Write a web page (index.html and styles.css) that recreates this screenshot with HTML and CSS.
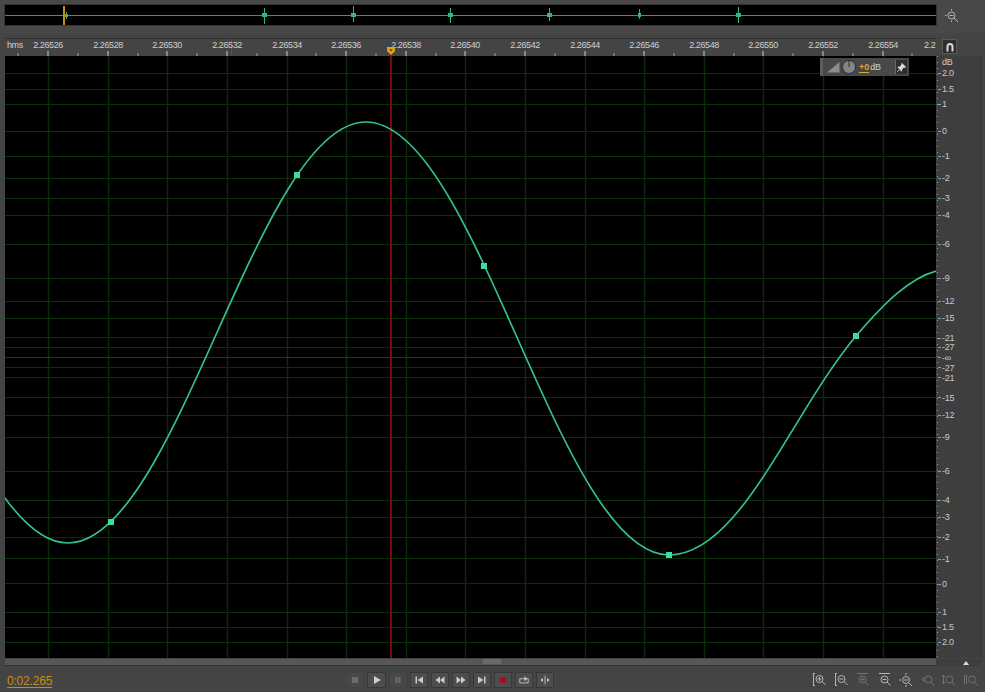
FILE: index.html
```html
<!DOCTYPE html>
<html lang="en">
<head>
    <meta charset="UTF-8">
    <meta name="viewport" content="width=device-width, initial-scale=1.0">
    <title>Waveform Editor</title>
    <link rel="stylesheet" href="styles.css">
</head>
<body>
    <div class="app">
        <div class="topRow">
            <svg class="overview" width="931" height="20" viewBox="5 5 931 20">
                <rect x="5" y="5" width="931" height="20" fill="#000"/>
                <line class="ovLine" x1="5" y1="15.5" x2="936" y2="15.5"/>
                <path class="ovSpike" d="M66.5 12v7M264.5 8v16M353.5 6v16M450.5 8v15M549.5 8v13M639.5 9v10M738.5 7v16"/>
                <path class="ovBlob" d="M65 14h3v3h-3zM262 13h5v4h-5zM351 13h5v4h-5zM448 13h5v4h-5zM547 13h5v4h-5zM638 13h3v4h-3zM736 13h5v4h-5z"/>
                <rect x="63" y="6" width="2" height="19" fill="#d08a10"/>
            </svg>
            <svg class="zoomOverview" width="16" height="16" viewBox="0 0 16 16">
                <circle class="ic" cx="7.5" cy="7.5" r="3.5"/>
                <path class="ic" d="M5.5 7.5h4M10 10l4 4M7.5 1v1.5M7.5 12.5v1.5M1 7.5h1.5"/>
            </svg>
        </div>

        <div class="rulerRow">
            <svg class="ruler" width="931" height="18" viewBox="5 38 931 18">
                <rect x="5" y="38" width="931" height="1" fill="#2f2f2f"/>
                <line x1="231.5" y1="39" x2="231.5" y2="56" stroke="#6a4f22"/>
                <path class="tickMajor" d="M48 51v5M108 51v5M167 51v5M227 51v5M287 51v5M346 51v5M406 51v5M465 51v5M525 51v5M585 51v5M644 51v5M704 51v5M763 51v5M823 51v5M883 51v5"/>
                <path class="tickMinor" d="M18 53v3M78 53v3M138 53v3M197 53v3M257 53v3M316 53v3M376 53v3M436 53v3M495 53v3M555 53v3M614 53v3M674 53v3M734 53v3M793 53v3M853 53v3M912 53v3"/>
                <text class="rulerText" x="7" y="48">hms</text>
                <g class="rulerLabels">
                    <text x="48" y="48">2.26526</text>
                    <text x="108" y="48">2.26528</text>
                    <text x="167" y="48">2.26530</text>
                    <text x="227" y="48">2.26532</text>
                    <text x="287" y="48">2.26534</text>
                    <text x="346" y="48">2.26536</text>
                    <text x="406" y="48">2.26538</text>
                    <text x="465" y="48">2.26540</text>
                    <text x="525" y="48">2.26542</text>
                    <text x="585" y="48">2.26544</text>
                    <text x="644" y="48">2.26546</text>
                    <text x="704" y="48">2.26548</text>
                    <text x="763" y="48">2.26550</text>
                    <text x="823" y="48">2.26552</text>
                    <text x="883" y="48">2.26554</text>
                </g>
                <text class="rulerText" x="924" y="48">2.2</text>
                <path d="M387 47h8v4l-4 4l-4-4z" fill="#e0a51c"/>
                <path d="M389 49h4l-2 3z" fill="#7a5a10"/>
            </svg>
            <button class="snapBtn" type="button">
                <svg width="10" height="10" viewBox="0 0 10 10">
                    <path d="M1.5 9.5V4.5a3.5 3.5 0 0 1 7 0v5h-2V4.5a1.5 1.5 0 0 0-3 0v5z" fill="#d8d8d8"/>
                </svg>
            </button>
        </div>

        <div class="mainRow">
            <div class="canvasWrap">
                <svg class="canvas" width="931" height="602" viewBox="5 56 931 602">
                    <rect x="5" y="56" width="931" height="602" fill="#000"/>
                    <path class="gridH" d="M5 73.5h931M5 89.5h931M5 104.5h931M5 131.5h931M5 156.5h931M5 178.5h931M5 198.5h931M5 215.5h931M5 244.5h931M5 278.5h931M5 301.5h931M5 318.5h931M5 337.5h931M5 347.5h931M5 367.5h931M5 377.5h931M5 397.5h931M5 415.5h931M5 437.5h931M5 471.5h931M5 500.5h931M5 517.5h931M5 537.5h931M5 558.5h931M5 583.5h931M5 612.5h931M5 627.5h931M5 642.5h931"/>
                    <path class="gridV" d="M48.5 56v602M108.5 56v602M167.5 56v602M227.5 56v602M287.5 56v602M346.5 56v602M406.5 56v602M465.5 56v602M525.5 56v602M585.5 56v602M644.5 56v602M704.5 56v602M763.5 56v602M823.5 56v602M883.5 56v602"/>
                    <line class="centerLine" x1="5" y1="357.5" x2="936" y2="357.5"/>
                    <line class="playhead" x1="391" y1="56" x2="391" y2="658"/>
                    <path class="curve" d="M-230 122C-121.500 122 -40.500 543 68 543C176.500 543 257.500 122 366 122C476.400 122 558.600 555 669 555C740 555 790 415 856 336C885 302 910 278 936 271"/>
                    <g class="marker">
                        <rect x="108" y="519" width="6" height="6"/>
                        <rect x="294" y="172" width="6" height="6"/>
                        <rect x="481" y="263" width="6" height="6"/>
                        <rect x="666" y="552" width="6" height="6"/>
                        <rect x="853" y="333" width="6" height="6"/>
                    </g>
                </svg>
                <div class="hud">
                    <span class="hudGrip"></span>
                    <svg width="13" height="12" viewBox="0 0 13 12">
                        <path d="M0 11.500L12.500 1v10.500z" fill="#8c8c8c"/>
                    </svg>
                    <svg class="hudKnob" width="14" height="14" viewBox="0 0 14 14">
                        <circle cx="7" cy="7" r="6.500" fill="#868686" stroke="#2e2e2e"/>
                        <line x1="7" y1="1" x2="7" y2="7" stroke="#2e2e2e"/>
                    </svg>
                    <span class="hudValue">+0</span>
                    <span class="hudUnit">dB</span>
                    <span class="hudPin">
                        <svg width="9" height="9" viewBox="0 0 9 9">
                            <path d="M5 0l4 4-1 1-1-.500-2 2 .200 1.500-1 .500-1.500-2L.500 9 0 8.500l2.500-2.500-2-1.500.500-1 1.500.200 2-2L4 1z" fill="#d8d8d8"/>
                        </svg>
                    </span>
                </div>
            </div>
            <svg class="dbScale" width="45" height="602" viewBox="936 56 45 602">
                <line class="scaleDots" x1="937.500" y1="56" x2="937.500" y2="658"/>
                <path class="scaleTick" d="M938 73.500h3M938 89.500h3M938 104.500h3M938 131.500h3M938 156.500h3M938 178.500h3M938 198.500h3M938 215.500h3M938 244.500h3M938 278.500h3M938 301.500h3M938 318.500h3M938 338.500h3M938 347.500h3M938 357.500h3M938 367.500h3M938 377.500h3M938 397.500h3M938 415.500h3M938 437.500h3M938 471.500h3M938 500.500h3M938 517.500h3M938 537.500h3M938 559.500h3M938 584.500h3M938 612.500h3M938 627.500h3M938 642.500h3"/>
                <g class="dbLabels">
                    <text x="942" y="65">dB</text>
                    <text x="942" y="76">2.0</text>
                    <text x="942" y="92">1.5</text>
                    <text x="942" y="107">1</text>
                    <text x="942" y="134">0</text>
                    <text x="942" y="159">-1</text>
                    <text x="942" y="181">-2</text>
                    <text x="942" y="201">-3</text>
                    <text x="942" y="218">-4</text>
                    <text x="942" y="247">-6</text>
                    <text x="942" y="281">-9</text>
                    <text x="942" y="304">-12</text>
                    <text x="942" y="321">-15</text>
                    <text x="942" y="341">-21</text>
                    <text x="942" y="350">-27</text>
                    <text x="942" y="361">-∞</text>
                    <text x="942" y="371">-27</text>
                    <text x="942" y="381">-21</text>
                    <text x="942" y="401">-15</text>
                    <text x="942" y="418">-12</text>
                    <text x="942" y="440">-9</text>
                    <text x="942" y="474">-6</text>
                    <text x="942" y="503">-4</text>
                    <text x="942" y="520">-3</text>
                    <text x="942" y="540">-2</text>
                    <text x="942" y="562">-1</text>
                    <text x="942" y="587">0</text>
                    <text x="942" y="615">1</text>
                    <text x="942" y="630">1.5</text>
                    <text x="942" y="645">2.0</text>
                </g>
            </svg>
        </div>

        <div class="scrollRow">
            <div class="scrollTrack"><span class="scrollGrip"></span></div>
            <div class="scrollSide"><span class="scrollArrow"></span></div>
        </div>

        <div class="footer">
            <span class="timecode">0:02.265</span>
            <div class="transport">
                <button class="tBtn off" type="button"><svg viewBox="0 0 10 10"><rect class="dim" x="2" y="2" width="6" height="6"/></svg></button>
                <button class="tBtn wide" type="button"><svg viewBox="0 0 10 10"><path class="lit" d="M2 1l7 4-7 4z"/></svg></button>
                <button class="tBtn off" type="button"><svg viewBox="0 0 10 10"><path class="dim" d="M2.500 2h2v6h-2zM5.500 2h2v6h-2z"/></svg></button>
                <button class="tBtn" type="button"><svg viewBox="0 0 10 10"><path class="lit" d="M1.500 1.500h1.500v7H1.500zM9 1.500v7L3.500 5z"/></svg></button>
                <button class="tBtn" type="button"><svg viewBox="0 0 10 10"><path class="lit" d="M5 1.500v7L.500 5zM9.500 1.500v7L5 5z"/></svg></button>
                <button class="tBtn" type="button"><svg viewBox="0 0 10 10"><path class="lit" d="M5 1.500v7L9.500 5zM.500 1.500v7L5 5z"/></svg></button>
                <button class="tBtn" type="button"><svg viewBox="0 0 10 10"><path class="lit" d="M7 1.500h1.500v7H7zM1 1.500v7L6.500 5z"/></svg></button>
                <button class="tBtn" type="button"><svg viewBox="0 0 10 10"><circle cx="5" cy="5" r="3.200" fill="#a5101c"/></svg></button>
                <button class="tBtn" type="button"><svg viewBox="0 0 12 10"><path class="stroke" d="M1 3.500h7M1 3.500v5h10v-5h-1.500"/><path class="lit" d="M6.500 .500l3.500 3-3.500 3z"/></svg></button>
                <button class="tBtn" type="button"><svg viewBox="0 0 12 10"><path class="lit" d="M3.500 2.500v5L.500 5zM8.500 2.500v5l3-2.500z"/><path class="stroke" d="M6 0v10"/></svg></button>
            </div>
            <div class="zoomTools">
                <svg class="zIcon" viewBox="0 0 14 14"><path class="ic" d="M.500 1v11M0 .500h2M0 12.500h2"/><circle class="ic" cx="6.500" cy="6" r="3.500"/><path class="ic" d="M4.500 6h4M6.500 4v4M9 8.500l3.500 3.500"/></svg>
                <svg class="zIcon" viewBox="0 0 14 14"><path class="ic" d="M.500 1v11M0 .500h2M0 12.500h2"/><circle class="ic" cx="6.500" cy="6" r="3.500"/><path class="ic" d="M4.500 6h4M9 8.500l3.500 3.500"/></svg>
                <svg class="zIcon dimIcon" viewBox="0 0 14 14"><path class="ic" d="M1 .500h11"/><circle class="ic" cx="6.500" cy="6.500" r="3.500"/><path class="ic" d="M4.500 6.500h4M6.500 4.500v4M9 9l3.500 3.500"/></svg>
                <svg class="zIcon" viewBox="0 0 14 14"><path class="ic" d="M1 .500h11"/><circle class="ic" cx="6.500" cy="6.500" r="3.500"/><path class="ic" d="M4.500 6.500h4M9 9l3.500 3.500"/></svg>
                <svg class="zIcon" viewBox="0 0 14 14"><circle class="ic" cx="7" cy="7" r="3.500"/><path class="ic" d="M5 7h4M9.500 9.500l3.500 3.500M7 0v2M7 12v2M0 7h2"/></svg>
                <svg class="zIcon dimIcon" viewBox="0 0 14 14"><circle class="ic" cx="7.500" cy="6.500" r="3.500"/><path class="ic" d="M10 9l3 3.500M1 6.500l2-2v4z"/></svg>
                <svg class="zIcon dimIcon" viewBox="0 0 14 14"><circle class="ic" cx="7.500" cy="6.500" r="3.500"/><path class="ic" d="M10 9l3 3.500M1.500 2v9M0 4l1.500-2 1.500 2M0 9l1.500 2 1.500-2"/></svg>
                <svg class="zIcon dimIcon" viewBox="0 0 14 14"><circle class="ic" cx="8" cy="6.500" r="3.500"/><path class="ic" d="M10.500 9l3 3.500M.500 2v9M2.500 2v9"/></svg>
            </div>
        </div>
    </div>
</body>
</html>
```

FILE: styles.css
```css
body{
    margin: 0;
    background-color: #444;
    font-family: "Liberation Sans", Arial, sans-serif;
    overflow: hidden;
}

svg{
    display: block;
}

.app{
    width: 985px;
    height: 692px;
    display: flex;
    flex-direction: column;
}

.topRow{
    height: 33px;
    flex-shrink: 0;
    padding: 5px 0 0 5px;
    box-sizing: border-box;
    display: flex;
    align-items: flex-start;
    background-color: #484848;
}

.overview{
    outline: 1px solid #333;
}

.ovLine{
    stroke: #2f9b76;
    stroke-width: 1;
}

.ovSpike{
    stroke: #2fb88a;
    stroke-width: 1;
    fill: none;
}

.ovBlob{
    fill: #2fb88a;
}

.zoomOverview{
    margin: 3px 0 0 8px;
}

.ic{
    fill: none;
    stroke: #b4b4b4;
    stroke-width: 1;
}

.rulerRow{
    height: 23px;
    flex-shrink: 0;
    padding-left: 5px;
    display: flex;
    align-items: flex-end;
    box-sizing: border-box;
}

.ruler text{
    font-size: 9px;
    letter-spacing: -0.4px;
    fill: #cfcfcf;
}

.rulerLabels text{
    text-anchor: middle;
}

.tickMajor{
    stroke: #a0a0a0;
    stroke-width: 1.5;
}

.tickMinor{
    stroke: #858585;
    stroke-width: 1.5;
}

.snapBtn{
    width: 15px;
    height: 15px;
    margin: 0 0 2px 6px;
    padding: 0;
    display: flex;
    align-items: center;
    justify-content: center;
    background-color: #2e2e2e;
    border: 1px solid #5a5a5a;
}

.mainRow{
    height: 602px;
    flex-shrink: 0;
    padding-left: 5px;
    display: flex;
}

.canvasWrap{
    position: relative;
    width: 931px;
}

.gridH{
    stroke: #0b2f0b;
    stroke-width: 1;
}

.gridV{
    stroke: #0a2a0a;
    stroke-width: 1.5;
}

.centerLine{
    stroke: #6a161c;
    stroke-width: 1;
}

.playhead{
    stroke: #760b0b;
    stroke-width: 2;
}

.curve{
    fill: none;
    stroke: #35c08f;
    stroke-width: 1.7;
}

.marker{
    fill: #3fdc9f;
}

.hud{
    position: absolute;
    top: 2px;
    left: 815px;
    width: 89px;
    height: 18px;
    box-sizing: border-box;
    display: flex;
    align-items: center;
    background-color: #484848;
    font-size: 9px;
}

.hudGrip{
    width: 3px;
    height: 18px;
    margin-right: 4px;
    background-color: #5c5c5c;
}

.hudKnob{
    margin-left: 2px;
}

.hudValue{
    margin-left: 3px;
    color: #d9a531;
    font-weight: bold;
    border-bottom: 1px solid #d9a531;
}

.hudUnit{
    margin-left: 1px;
    letter-spacing: -0.3px;
    color: #cfcfcf;
}

.hudPin{
    width: 11px;
    height: 14px;
    margin-left: auto;
    margin-right: 2px;
    display: flex;
    align-items: center;
    justify-content: center;
    background-color: #2e2e2e;
    border-left: 1px solid #6a6a6a;
}

.dbScale{
    background-color: #3e3e3e;
    border-right: 1px solid #333;
}

.scaleDots{
    stroke: #9a9a9a;
    stroke-width: 1;
    stroke-dasharray: 1 5;
}

.scaleTick{
    stroke: #9a9a9a;
    stroke-width: 1;
}

.dbLabels text{
    font-size: 9px;
    letter-spacing: -0.3px;
    fill: #c8c8c8;
}

.scrollRow{
    height: 8px;
    flex-shrink: 0;
    padding: 1px 0 0 5px;
    box-sizing: border-box;
    display: flex;
}

.scrollTrack{
    width: 931px;
    height: 7px;
    padding-left: 478px;
    display: flex;
    background-color: #575757;
    border-bottom: 1px solid #333;
    box-sizing: border-box;
}

.scrollGrip{
    width: 18px;
    height: 5px;
    background-color: #6a6a6a;
}

.scrollSide{
    width: 45px;
    height: 7px;
    display: flex;
    justify-content: center;
    align-items: center;
    padding-left: 15px;
    box-sizing: border-box;
    background-color: #3e3e3e;
}

.scrollArrow{
    width: 0;
    height: 0;
    border-left: 3px solid transparent;
    border-right: 3px solid transparent;
    border-bottom: 4px solid #ddd;
}

.footer{
    height: 26px;
    flex-shrink: 0;
    padding-top: 2px;
    box-sizing: border-box;
    display: flex;
    align-items: center;
}

.timecode{
    width: 339px;
    margin: 1px 0 0 7px;
    font-size: 12px;
    letter-spacing: -0.2px;
    color: #c98a16;
    text-decoration: underline;
    text-underline-offset: 2px;
}

.transport{
    display: flex;
    gap: 3px;
}

.tBtn{
    width: 18px;
    height: 16px;
    padding: 0;
    display: flex;
    align-items: center;
    justify-content: center;
    background-color: #4d4d4d;
    border: 1px solid #383838;
}

.tBtn svg{
    width: 10px;
    height: 10px;
}

.tBtn.wide{
    width: 19px;
}

.tBtn.off{
    background-color: #484848;
    border-color: #414141;
}

.lit{
    fill: #cccccc;
}

.dim{
    fill: #6c6c6c;
}

.stroke{
    fill: none;
    stroke: #cccccc;
    stroke-width: 1;
}

.zoomTools{
    display: flex;
    gap: 7.500px;
    margin-left: 259px;
}

.zIcon{
    width: 14px;
    height: 14px;
}

.dimIcon{
    opacity: 0.4;
}
```
